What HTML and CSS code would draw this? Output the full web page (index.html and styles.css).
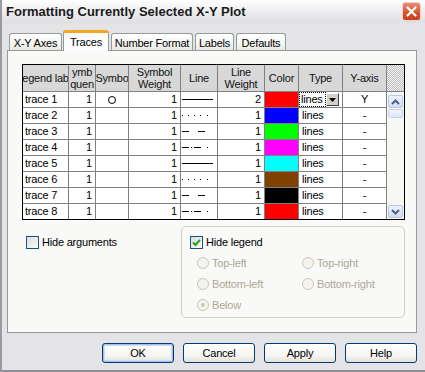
FILE: index.html
```html
<!DOCTYPE html>
<html>
<head>
<meta charset="utf-8">
<link rel="stylesheet" href="styles.css">
</head>
<body>
<div class="window">
  <div class="titlebar">
    <span class="title">Formatting Currently Selected X-Y Plot</span>
    <div class="close"><svg width="17" height="17" viewBox="0 0 17 17"><path d="M4.5 4.5 L12.5 12.5 M12.5 4.5 L4.5 12.5" stroke="#fff" stroke-width="2.2" stroke-linecap="round"/></svg></div>
  </div>
  <div class="client">
    <div class="tabs">
      <div class="tab t-xy">X-Y Axes</div>
      <div class="tab active t-traces">Traces</div>
      <div class="tab t-num">Number Format</div>
      <div class="tab t-lab">Labels</div>
      <div class="tab t-def">Defaults</div>
    </div>
    <div class="panel">
      <div class="grid">
        <div class="h"><span>egend lab</span></div>
        <div class="h"><span>ymb</span><span>quen</span></div>
        <div class="h"><span>Symbo</span></div>
        <div class="h"><span>Symbol</span><span>Weight</span></div>
        <div class="h"><span>Line</span></div>
        <div class="h"><span>Line</span><span>Weight</span></div>
        <div class="h"><span>Color</span></div>
        <div class="h"><span>Type</span></div>
        <div class="h"><span>Y-axis</span></div>
        <div class="h checker"></div>

        <div class="c">trace 1</div><div class="c r">1</div><div class="c ctr"><span class="sym"></span></div><div class="c r">1</div>
        <div class="c ln"><svg width="36" height="15"><line x1="1" y1="7.5" x2="32" y2="7.5" stroke="#000"/></svg></div>
        <div class="c r">2</div><div class="c sw red"></div>
        <div class="c type"><div class="combo"><span class="combo-text">lines</span><span class="combo-btn"><svg width="7" height="4"><path d="M0 0 H7 L3.5 4 Z" fill="#000"/></svg></span></div></div>
        <div class="c ctr">Y</div>
        <div class="scroll">
          <div class="sbtn"><svg width="9" height="6"><path d="M1 5 L4.5 1.5 L8 5" stroke="#4d6185" stroke-width="2" fill="none"/></svg></div>
          <div class="thumb"></div>
          <div class="track"></div>
          <div class="sbtn"><svg width="9" height="6"><path d="M1 1 L4.5 4.5 L8 1" stroke="#4d6185" stroke-width="2" fill="none"/></svg></div>
        </div>

        <div class="c">trace 2</div><div class="c r">1</div><div class="c"></div><div class="c r">1</div>
        <div class="c ln"><svg width="36" height="15"><g fill="#000"><rect x="1" y="7" width="1" height="1"/><rect x="7" y="7" width="1" height="1"/><rect x="13" y="7" width="1" height="1"/><rect x="19" y="7" width="1" height="1"/><rect x="26" y="7" width="1" height="1"/></g></svg></div>
        <div class="c r">1</div><div class="c sw blue"></div><div class="c type">lines</div><div class="c ctr">-</div>

        <div class="c">trace 3</div><div class="c r">1</div><div class="c"></div><div class="c r">1</div>
        <div class="c ln"><svg width="36" height="15"><g fill="#000"><rect x="1" y="7" width="7" height="1"/><rect x="17" y="7" width="7" height="1"/></g></svg></div>
        <div class="c r">1</div><div class="c sw lime"></div><div class="c type">lines</div><div class="c ctr">-</div>

        <div class="c">trace 4</div><div class="c r">1</div><div class="c"></div><div class="c r">1</div>
        <div class="c ln"><svg width="36" height="15"><g fill="#000"><rect x="1" y="7" width="7" height="1"/><rect x="10" y="7" width="1" height="1"/><rect x="13" y="7" width="7" height="1"/><rect x="26" y="7" width="1" height="1"/></g></svg></div>
        <div class="c r">1</div><div class="c sw magenta"></div><div class="c type">lines</div><div class="c ctr">-</div>

        <div class="c">trace 5</div><div class="c r">1</div><div class="c"></div><div class="c r">1</div>
        <div class="c ln"><svg width="36" height="15"><line x1="1" y1="7.5" x2="32" y2="7.5" stroke="#000"/></svg></div>
        <div class="c r">1</div><div class="c sw cyan"></div><div class="c type">lines</div><div class="c ctr">-</div>

        <div class="c">trace 6</div><div class="c r">1</div><div class="c"></div><div class="c r">1</div>
        <div class="c ln"><svg width="36" height="15"><g fill="#000"><rect x="1" y="7" width="1" height="1"/><rect x="7" y="7" width="1" height="1"/><rect x="13" y="7" width="1" height="1"/><rect x="19" y="7" width="1" height="1"/><rect x="26" y="7" width="1" height="1"/></g></svg></div>
        <div class="c r">1</div><div class="c sw brown"></div><div class="c type">lines</div><div class="c ctr">-</div>

        <div class="c">trace 7</div><div class="c r">1</div><div class="c"></div><div class="c r">1</div>
        <div class="c ln"><svg width="36" height="15"><g fill="#000"><rect x="1" y="7" width="7" height="1"/><rect x="17" y="7" width="7" height="1"/></g></svg></div>
        <div class="c r">1</div><div class="c sw black"></div><div class="c type">lines</div><div class="c ctr">-</div>

        <div class="c">trace 8</div><div class="c r">1</div><div class="c"></div><div class="c r">1</div>
        <div class="c ln"><svg width="36" height="15"><g fill="#000"><rect x="1" y="7" width="7" height="1"/><rect x="10" y="7" width="1" height="1"/><rect x="13" y="7" width="7" height="1"/><rect x="26" y="7" width="1" height="1"/></g></svg></div>
        <div class="c r">1</div><div class="c sw red"></div><div class="c type">lines</div><div class="c ctr">-</div>
      </div>

      <div class="options">
        <div class="left">
          <label class="check"><span class="box"></span><span>Hide arguments</span></label>
        </div>
        <div class="group">
          <label class="check"><span class="box"><svg width="11" height="11" viewBox="0 0 11 11"><path d="M2 5.5 L4.5 8 L9 2.8" stroke="#21a121" stroke-width="2" fill="none"/></svg></span><span>Hide legend</span></label>
          <div class="radios">
            <div class="radio"><span class="dot"></span><span>Top-left</span></div>
            <div class="radio"><span class="dot"></span><span>Top-right</span></div>
            <div class="radio"><span class="dot"></span><span>Bottom-left</span></div>
            <div class="radio"><span class="dot"></span><span>Bottom-right</span></div>
            <div class="radio"><span class="dot on"></span><span>Below</span></div>
          </div>
        </div>
      </div>
    </div>
    <div class="buttons">
      <div class="btn default">OK</div>
      <div class="btn">Cancel</div>
      <div class="btn">Apply</div>
      <div class="btn">Help</div>
    </div>
  </div>
</div>
</body>
</html>
```

FILE: styles.css
```css
* { box-sizing: border-box; }
html, body { margin: 0; padding: 0; }
body {
  font-family: "Liberation Sans", Arial, sans-serif;
  font-size: 11px;
  letter-spacing: -0.2px;
  color: #000;
  background: #e4e4e6;
}
.window {
  width: 425px;
  height: 372px;
  background: #e4e4e6;
  border-left: 2px solid #9a9aa2;
  border-bottom: 2px solid #8e8e96;
  overflow: hidden;
}
.titlebar {
  height: 23px;
  display: flex;
  align-items: center;
  padding-left: 4px;
  background: linear-gradient(#ffffff, #f1f1f4 40%, #dedee4);
}
.title {
  font-weight: bold;
  font-size: 13px;
  letter-spacing: 0;
  color: #1a1a1a;
}
.close {
  margin-left: auto;
  margin-right: 4px;
  width: 19px;
  height: 19px;
  border-radius: 3px;
  border: 1px solid #f4d0c8;
  background: linear-gradient(#e98d76, #d4512f 60%, #c4401f);
  display: flex;
  align-items: center;
  justify-content: center;
}
.client {
  padding: 7px 8px 0 5px;
}
.tabs {
  display: flex;
  align-items: flex-end;
  height: 21px;
  margin-left: 2px;
  position: relative;
  z-index: 2;
}
.tab {
  height: 17px;
  margin-bottom: 1px;
  border: 1px solid #919b9c;
  border-bottom: none;
  border-radius: 3px 3px 0 0;
  background: linear-gradient(#ffffff, #f3f3ef 70%, #e8e8e2);
  display: flex;
  align-items: center;
  justify-content: center;
  padding-top: 1px;
  white-space: nowrap;
}
.tab.active {
  height: 21px;
  margin-bottom: 0;
  background: #fcfcfe;
  border-top: 3px solid #f5a623;
  padding-top: 0;
}
.t-xy { width: 53px; }
.t-traces { width: 46px; margin-left: 1px; }
.t-num { width: 82px; margin-left: 2px; }
.t-lab { width: 39px; margin-left: 2px; }
.t-def { width: 50px; margin-left: 2px; }

.panel {
  margin-top: -1px;
  width: 410px;
  height: 283px;
  border: 1px solid #919b9c;
  background: #f9f9f7;
  padding: 13px 0 0 14px;
  position: relative;
  z-index: 1;
}
.grid {
  display: grid;
  width: max-content;
  grid-template-columns: 45px 26px 32px 51px 36px 46px 33px 43px 43px 17px;
  grid-template-rows: 26px repeat(8, 15px);
  gap: 1px;
  background: #808080;
  border: 1px solid #000;
}
.h {
  background: #d8d8d8;
  display: flex;
  flex-direction: column;
  align-items: center;
  justify-content: center;
  overflow: hidden;
  white-space: nowrap;
  line-height: 12px;
  color: #111;
}
.checker {
  background: repeating-conic-gradient(#bdbdbd 0 25%, #f4f4f4 0 50%) 0 0 / 2px 2px;
}
.c {
  background: #fff;
  line-height: 15px;
  height: 15px;
  padding: 0 2px;
  overflow: hidden;
  white-space: nowrap;
}
.r { text-align: right; padding-right: 3px; }
.ctr { text-align: center; }
.ln { padding: 0; }
.ln svg { display: block; }
.type { padding-left: 3px; }
.sym {
  display: inline-block;
  width: 8px;
  height: 8px;
  border: 1px solid #000;
  border-radius: 50%;
  vertical-align: -1px;
}
.sw { padding: 0; }
.red { background: #ff0000; }
.blue { background: #0000ff; }
.lime { background: #00ff00; }
.magenta { background: #ff00ff; }
.cyan { background: #00ffff; }
.brown { background: #804000; }
.black { background: #000000; }

.combo {
  display: flex;
  height: 15px;
  margin-left: -3px;
}
.combo-text {
  width: 28px;
  padding-left: 2px;
  outline: 1px dotted #000;
  outline-offset: -1px;
  line-height: 15px;
}
.combo-btn {
  margin-left: auto;
  margin-right: 1px;
  margin-top: 1px;
  width: 13px;
  height: 13px;
  background: #d4d0c8;
  border-top: 1px solid #fff;
  border-left: 1px solid #fff;
  border-right: 1px solid #404040;
  border-bottom: 1px solid #404040;
  display: flex;
  align-items: center;
  justify-content: center;
}
.combo-btn svg { display: block; }

.scroll {
  grid-column: 10;
  grid-row: 2 / span 8;
  background: #f7f7f3;
  display: flex;
  flex-direction: column;
  padding: 3px 1px 1px 1px;
}
.sbtn {
  height: 13px;
  border: 1px solid #b8c8e8;
  border-radius: 2px;
  background: linear-gradient(#eef2fb, #d4def2);
  display: flex;
  align-items: center;
  justify-content: center;
}
.sbtn svg { display: block; }
.thumb {
  height: 9px;
  margin-top: 1px;
  border: 1px solid #c6d2ea;
  border-radius: 2px;
  background: linear-gradient(#f2f5fc, #dde5f5);
}
.track { flex: 1; }

.options {
  display: flex;
  margin-top: 6px;
}
.left {
  width: 159px;
  padding: 10px 0 0 4px;
}
.check {
  display: flex;
  align-items: center;
  gap: 3px;
  height: 13px;
  line-height: 13px;
}
.box {
  width: 13px;
  height: 13px;
  border: 1px solid #1c5180;
  background: linear-gradient(135deg, #dcdcd7, #fafaf8);
  display: flex;
  align-items: center;
  justify-content: center;
}
.box svg { display: block; }
.group {
  width: 224px;
  height: 92px;
  border: 1px solid #d0d0bf;
  border-radius: 5px;
  padding: 9px 0 0 8px;
}
.radios {
  display: grid;
  grid-template-columns: 105px auto;
  row-gap: 9px;
  margin-top: 8px;
  margin-left: 7px;
}
.radio {
  display: flex;
  align-items: center;
  gap: 3px;
  height: 12px;
  color: #aca899;
}
.dot {
  width: 12px;
  height: 12px;
  border: 1px solid #cac8bb;
  border-radius: 50%;
  background: #f4f3ee;
  display: flex;
  align-items: center;
  justify-content: center;
}
.dot.on::after {
  content: "";
  width: 4px;
  height: 4px;
  border-radius: 50%;
  background: #cac8bb;
}

.buttons {
  display: flex;
  justify-content: flex-end;
  gap: 9px;
  width: 410px;
  margin-top: 10px;
}
.btn {
  width: 72px;
  height: 20px;
  border: 1px solid #003c74;
  border-radius: 3px;
  background: linear-gradient(#ffffff, #f3f3ef 70%, #e2e0d8);
  display: flex;
  align-items: center;
  justify-content: center;
}
.btn.default {
  box-shadow: inset 0 0 0 1px #a6bde6, inset 0 0 0 2px #cfdcf4;
}
```
